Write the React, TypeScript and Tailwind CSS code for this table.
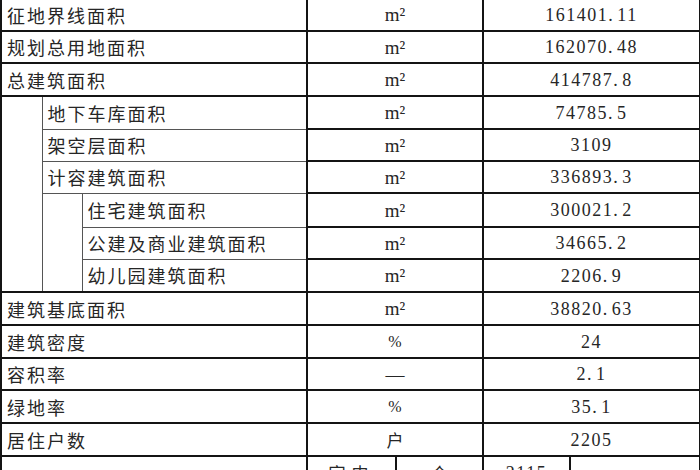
import React from 'react'

type Row = {
  label: string
  level: 0 | 1 | 2
  unit: string
  value: string
  h: number
}

const rows: Row[] = [
  { label: '征地界线面积', level: 0, unit: 'm²', value: '161401.11', h: 33 },
  { label: '规划总用地面积', level: 0, unit: 'm²', value: '162070.48', h: 32 },
  { label: '总建筑面积', level: 0, unit: 'm²', value: '414787.8', h: 33 },
  { label: '地下车库面积', level: 1, unit: 'm²', value: '74785.5', h: 33 },
  { label: '架空层面积', level: 1, unit: 'm²', value: '3109', h: 32 },
  { label: '计容建筑面积', level: 1, unit: 'm²', value: '336893.3', h: 32 },
  { label: '住宅建筑面积', level: 2, unit: 'm²', value: '300021.2', h: 34 },
  { label: '公建及商业建筑面积', level: 2, unit: 'm²', value: '34665.2', h: 32 },
  { label: '幼儿园建筑面积', level: 2, unit: 'm²', value: '2206.9', h: 33 },
  { label: '建筑基底面积', level: 0, unit: 'm²', value: '38820.63', h: 33 },
  { label: '建筑密度', level: 0, unit: '%', value: '24', h: 33 },
  { label: '容积率', level: 0, unit: '—', value: '2.1', h: 32 },
  { label: '绿地率', level: 0, unit: '%', value: '35.1', h: 33 },
  { label: '居住户数', level: 0, unit: '户', value: '2205', h: 33 },
]

const cjk = "font-['Noto_Sans_CJK_SC',sans-serif]"
const serif = "font-['Liberation_Serif','Noto_Sans_CJK_SC',serif]"
const dark = 'border-2 border-[#141414]'
const soft = 'border-[1.5px] border-[#555]'

function Value({ v }: { v: string }) {
  const [a, b] = v.split('.')
  return (
    <span className={`${serif} text-[18px] tracking-[1.5px]`}>
      {a}
      {b !== undefined && (
        <>
          <span className="pr-[3px]">.</span>
          {b}
        </>
      )}
    </span>
  )
}

function Unit({ u }: { u: string }) {
  if (u === '户') return <span className={`${cjk} text-[17px]`}>{u}</span>
  if (u === '%') return <span className={`${serif} text-[16px]`}>{u}</span>
  return <span className={`${serif} text-[19px]`}>{u}</span>
}

export default function App() {
  return (
    <div className="h-[470px] w-[700px] overflow-hidden bg-white text-[#262626]">
      <table className="-mt-[3px] w-[699px] table-fixed border-collapse">
        <colgroup>
          <col className="w-[41px]" />
          <col className="w-[40px]" />
          <col className="w-[225px]" />
          <col className="w-[89px]" />
          <col className="w-[87px]" />
          <col className="w-[87px]" />
          <col className="w-[130px]" />
        </colgroup>
        <tbody>
          {rows.map((r, i) => (
            <tr key={r.label} style={{ height: r.h }}>
              {i === 3 && <td rowSpan={6} className={`${soft} border-l-2 border-l-[#141414]`} />}
              {i === 6 && <td rowSpan={3} className={soft} />}
              <td
                colSpan={r.level === 0 ? 3 : r.level === 1 ? 2 : 1}
                className={`${r.level === 0 ? dark : soft} ${cjk} p-0 pl-[5px] text-[18px] tracking-[2px] whitespace-nowrap leading-none`}
              >
                {r.label}
              </td>
              <td colSpan={2} className={`${dark} p-0 text-center leading-none`}>
                <Unit u={r.unit} />
              </td>
              <td colSpan={2} className={`${dark} p-0 text-center leading-none`}>
                <Value v={r.value} />
              </td>
            </tr>
          ))}
          <tr className="h-[33px]">
            <td colSpan={3} className={dark} />
            <td className={`${dark} ${cjk} p-0 text-center text-[17px] tracking-[6px] leading-none`}>室内</td>
            <td className={`${dark} ${cjk} p-0 text-center text-[17px] leading-none`}>个</td>
            <td className={`${dark} p-0 text-center leading-none`}>
              <Value v="2115" />
            </td>
            <td className={dark} />
          </tr>
        </tbody>
      </table>
    </div>
  )
}
